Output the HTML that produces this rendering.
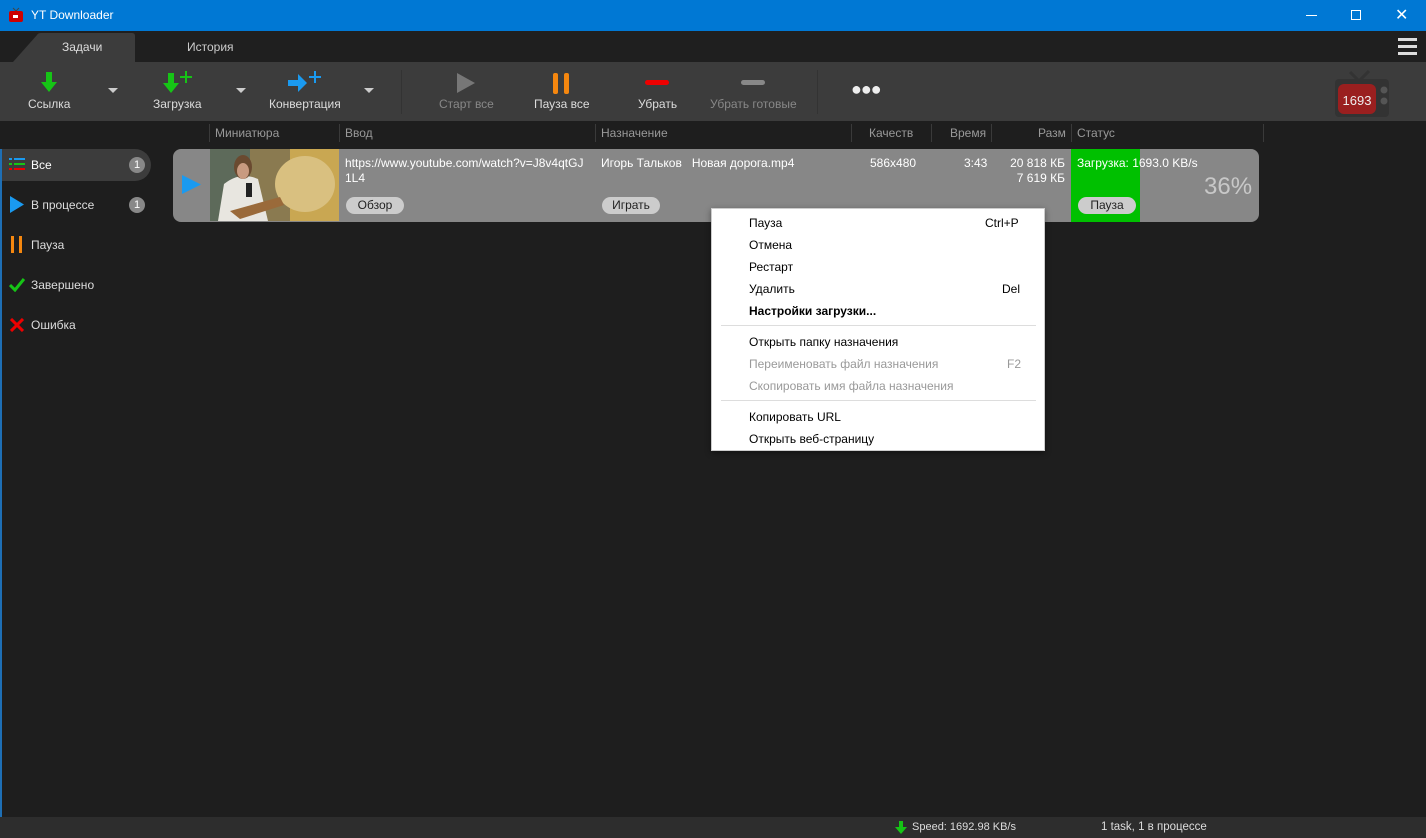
<!DOCTYPE html>
<html><head><meta charset="utf-8"><style>
*{margin:0;padding:0;box-sizing:border-box}
body{width:1426px;height:838px;background:#1e1e1e;font-family:"Liberation Sans","Noto Sans CJK SC",sans-serif;font-size:12px;color:#ddd;position:relative;overflow:hidden}
.a{position:absolute;white-space:nowrap}
.tb{left:0;top:0;width:1426px;height:31px;background:#0078d4;color:#fff}
.tabs{left:0;top:31px;width:1426px;height:31px;background:#1f1f1f}
.tool{left:0;top:62px;width:1426px;height:59px;background:#3c3c3c}
.lbl{font-size:12px;color:#ddd;text-align:center}
.dis{color:#888}
.hdr{top:121px;height:24px;left:0;width:1426px;background:#1e1e1e;color:#999}
.sep{width:1px;height:18px;background:#3a3a3a;top:124px}
.menu{left:711px;top:208px;width:334px;height:243px;background:#fff;border:1px solid #ccc;color:#000;font-size:12px;box-shadow:0 2px 6px rgba(0,0,0,.4)}
.menu div{position:absolute;left:37px}
.pill{background:#ccc;color:#222;border-radius:9px;height:17px;line-height:17px;text-align:center;font-size:12px}
</style></head><body>
<div class="a tb">
 <svg class="a" style="left:8px;top:7px" width="16" height="16"><path d="M5 1l3 3 3-3" stroke="#444" fill="none"/><rect x="1" y="4" width="14" height="11" rx="2" fill="#c00"/><rect x="5" y="8" width="5" height="3" fill="#fff"/></svg>
 <div class="a" style="left:31px;top:8px;font-size:12px">YT Downloader</div>
 <div class="a" style="left:1306px;top:15px;width:11px;height:1px;background:#fff"></div>
 <div class="a" style="left:1351px;top:10px;width:10px;height:10px;border:1px solid #fff"></div>
 <div class="a" style="left:1395px;top:5px;font-size:16px">✕</div>
</div>
<div class="a tabs">
 <svg class="a" style="left:13px;top:2px" width="124" height="29"><path d="M0 29 L24 2 Q25 0 28 0 L119 0 Q122 0 122 3 L122 29Z" fill="#3c3c3c"/></svg>
 <div class="a" style="left:62px;top:9px;color:#ddd">Задачи</div>
 <div class="a" style="left:187px;top:9px;color:#ccc">История</div>
 <div class="a" style="left:1398px;top:7px;width:19px;height:3px;background:#ddd"></div>
 <div class="a" style="left:1398px;top:14px;width:19px;height:3px;background:#ddd"></div>
 <div class="a" style="left:1398px;top:21px;width:19px;height:3px;background:#ddd"></div>
</div>
<div class="a tool">
 <svg class="a" style="left:40px;top:10px" width="18" height="22"><path d="M6 0h6v10h5l-8 10-8-10h5z" fill="#16c416"/></svg>
 <div class="a lbl" style="left:28px;top:35px">Ссылка</div>
 <svg class="a" style="left:108px;top:26px" width="10" height="6"><path d="M0 0h10l-5 5z" fill="#ccc"/></svg>
 <svg class="a" style="left:162px;top:9px" width="34" height="24"><path d="M6 2h6v10h5l-8 10-8-10h5z" fill="#16c416"/><path d="M24 0v12M18 6h12" stroke="#16c416" stroke-width="2"/></svg>
 <div class="a lbl" style="left:153px;top:35px">Загрузка</div>
 <svg class="a" style="left:236px;top:26px" width="10" height="6"><path d="M0 0h10l-5 5z" fill="#ccc"/></svg>
 <svg class="a" style="left:288px;top:9px" width="36" height="24"><path d="M0 9h10V3l9 9-9 9v-6H0z" fill="#1a9af0"/><path d="M27 0v12M21 6h12" stroke="#1a9af0" stroke-width="2"/></svg>
 <div class="a lbl" style="left:269px;top:35px">Конвертация</div>
 <svg class="a" style="left:364px;top:26px" width="10" height="6"><path d="M0 0h10l-5 5z" fill="#ccc"/></svg>
 <div class="a" style="left:401px;top:8px;width:1px;height:44px;background:#333"></div>
 <svg class="a" style="left:456px;top:10px" width="20" height="22"><path d="M1 1l18 10-18 10z" fill="#777"/></svg>
 <div class="a lbl dis" style="left:439px;top:35px">Старт все</div>
 <div class="a" style="left:553px;top:11px;width:5px;height:21px;background:#f5870f;border-radius:2px"></div>
 <div class="a" style="left:564px;top:11px;width:5px;height:21px;background:#f5870f;border-radius:2px"></div>
 <div class="a lbl" style="left:534px;top:35px">Пауза все</div>
 <div class="a" style="left:645px;top:18px;width:24px;height:5px;background:#e00;border-radius:3px"></div>
 <div class="a lbl" style="left:638px;top:35px">Убрать</div>
 <div class="a" style="left:741px;top:18px;width:24px;height:5px;background:#888;border-radius:3px"></div>
 <div class="a lbl dis" style="left:710px;top:35px">Убрать готовые</div>
 <div class="a" style="left:817px;top:8px;width:1px;height:44px;background:#333"></div>
 <div class="a" style="left:851px;top:17px;font-size:18px;color:#eee;letter-spacing:-1px">●●●</div>
 <svg class="a" style="left:1334px;top:2px" width="60" height="56"><path d="M16 8l9 9 10-10" stroke="#333" stroke-width="3" fill="none"/><rect x="1" y="15" width="54" height="38" rx="4" fill="#333"/><rect x="4" y="20" width="38" height="30" rx="6" fill="#9a1f1f"/><circle cx="50" cy="26" r="3.5" fill="#555"/><circle cx="50" cy="37" r="3.5" fill="#555"/><text x="23" y="41" font-size="13" fill="#eee" text-anchor="middle" font-family="Liberation Sans">1693</text></svg>
</div>
<div class="a hdr">
 <div class="a" style="left:215px;top:5px">Миниатюра</div>
 <div class="a" style="left:345px;top:5px">Ввод</div>
 <div class="a" style="left:601px;top:5px">Назначение</div>
 <div class="a" style="left:869px;top:5px">Качеств</div>
 <div class="a" style="left:950px;top:5px">Время</div>
 <div class="a" style="left:1038px;top:5px">Разм</div>
 <div class="a" style="left:1077px;top:5px">Статус</div>
</div>
<div class="a sep" style="left:209px"></div><div class="a sep" style="left:339px"></div><div class="a sep" style="left:595px"></div><div class="a sep" style="left:851px"></div><div class="a sep" style="left:931px"></div><div class="a sep" style="left:991px"></div><div class="a sep" style="left:1071px"></div><div class="a sep" style="left:1263px"></div>
<div class="a" style="left:0;top:149px;width:151px;height:32px;background:#3c3c3c;border-radius:0 16px 16px 0"></div>
<div class="a" style="left:0;top:149px;width:2px;height:668px;background:#1e6fb5"></div>
<svg class="a" style="left:9px;top:157px" width="16" height="14"><path d="M0 2h3M5 2h11" stroke="#1a9af0" stroke-width="2"/><path d="M0 7h3M5 7h11" stroke="#16c416" stroke-width="2"/><path d="M0 12h3M5 12h11" stroke="#e00" stroke-width="2"/></svg>
<div class="a" style="left:31px;top:158px;color:#fff">Все</div>
<div class="a" style="left:129px;top:157px;width:16px;height:16px;border-radius:8px;background:#888;color:#fff;font-size:11px;text-align:center;line-height:16px">1</div>
<svg class="a" style="left:10px;top:196px" width="14" height="17"><path d="M0 0l14 8.5L0 17z" fill="#1a9af0"/></svg>
<div class="a" style="left:31px;top:198px">В процессе</div>
<div class="a" style="left:129px;top:197px;width:16px;height:16px;border-radius:8px;background:#888;color:#fff;font-size:11px;text-align:center;line-height:16px">1</div>
<div class="a" style="left:11px;top:236px;width:3px;height:17px;background:#f5870f"></div><div class="a" style="left:19px;top:236px;width:3px;height:17px;background:#f5870f"></div>
<div class="a" style="left:31px;top:238px">Пауза</div>
<svg class="a" style="left:9px;top:278px" width="16" height="14"><path d="M1 7l5 5L15 1" stroke="#16c416" stroke-width="3" fill="none"/></svg>
<div class="a" style="left:31px;top:278px">Завершено</div>
<svg class="a" style="left:10px;top:318px" width="14" height="14"><path d="M1 1l12 12M13 1L1 13" stroke="#e00" stroke-width="3"/></svg>
<div class="a" style="left:31px;top:318px">Ошибка</div>
<div class="a" style="left:173px;top:149px;width:1086px;height:73px;background:#878787;border-radius:8px"></div>
<svg class="a" style="left:182px;top:175px" width="19" height="19"><path d="M0 0l19 9.5L0 19z" fill="#1a9af0"/></svg>
<svg class="a" style="left:210px;top:149px" width="129" height="72"><rect width="129" height="72" fill="#8a7a50"/><rect width="40" height="72" fill="#5d6a5a"/><rect x="80" width="49" height="72" fill="#c9a752"/><ellipse cx="95" cy="35" rx="30" ry="28" fill="#d9c080"/><path d="M8 72 L14 35 Q30 22 48 30 L58 72Z" fill="#e8e6e0"/><ellipse cx="33" cy="18" rx="9" ry="12" fill="#6a4a30"/><ellipse cx="33" cy="22" rx="6" ry="8" fill="#c89a80"/><path d="M20 62 L70 48 L74 56 L30 70Z" fill="#9a6a3a"/><rect x="36" y="34" width="6" height="14" fill="#222"/></svg>
<div class="a" style="left:345px;top:156px;color:#fff;line-height:15px">https://www.youtube.com/watch?v=J8v4qtGJ<br>1L4</div>
<div class="a pill" style="left:346px;top:197px;width:58px">Обзор</div>
<div class="a" style="left:601px;top:156px;color:#fff">Игорь Тальков &nbsp; Новая дорога.mp4</div>
<div class="a pill" style="left:602px;top:197px;width:58px">Играть</div>
<div class="a" style="left:870px;top:156px;color:#fff">586x480</div>
<div class="a" style="left:964px;top:156px;color:#fff">3:43</div>
<div class="a" style="left:1000px;top:156px;width:65px;text-align:right;color:#fff;line-height:15px">20 818 КБ<br>7 619 КБ</div>
<div class="a" style="left:1071px;top:149px;width:69px;height:73px;background:#00c000"></div>
<div class="a" style="left:1077px;top:156px;color:#fff">Загрузка: 1693.0 KB/s</div>
<div class="a pill" style="left:1078px;top:197px;width:58px">Пауза</div>
<div class="a" style="left:1204px;top:173px;font-size:24px;color:#c8c8c8">36%</div>
<div class="a menu">
 <div style="top:7px">Пауза</div><div style="top:7px;left:273px">Ctrl+P</div>
 <div style="top:29px">Отмена</div>
 <div style="top:51px">Рестарт</div>
 <div style="top:73px">Удалить</div><div style="top:73px;left:290px">Del</div>
 <div style="top:95px;font-weight:bold">Настройки загрузки...</div>
 <div style="top:116px;left:9px;width:315px;height:1px;background:#ddd"></div>
 <div style="top:126px">Открыть папку назначения</div>
 <div style="top:148px;color:#999">Переименовать файл назначения</div><div style="top:148px;left:295px;color:#999">F2</div>
 <div style="top:170px;color:#999">Скопировать имя файла назначения</div>
 <div style="top:191px;left:9px;width:315px;height:1px;background:#ddd"></div>
 <div style="top:201px">Копировать URL</div>
 <div style="top:223px">Открыть веб-страницу</div>
</div>
<div class="a" style="left:0;top:817px;width:1426px;height:21px;background:#2d2d2d"></div>
<svg class="a" style="left:895px;top:821px" width="12" height="14"><path d="M4 0h4v6h4l-6 7-6-7h4z" fill="#16c416"/></svg>
<div class="a" style="left:912px;top:821px;color:#ddd;font-size:11px">Speed: 1692.98 KB/s</div>
<div class="a" style="left:1101px;top:821px;color:#ddd;font-size:11.5px">1 task, 1 в процессе</div>
</body></html>
